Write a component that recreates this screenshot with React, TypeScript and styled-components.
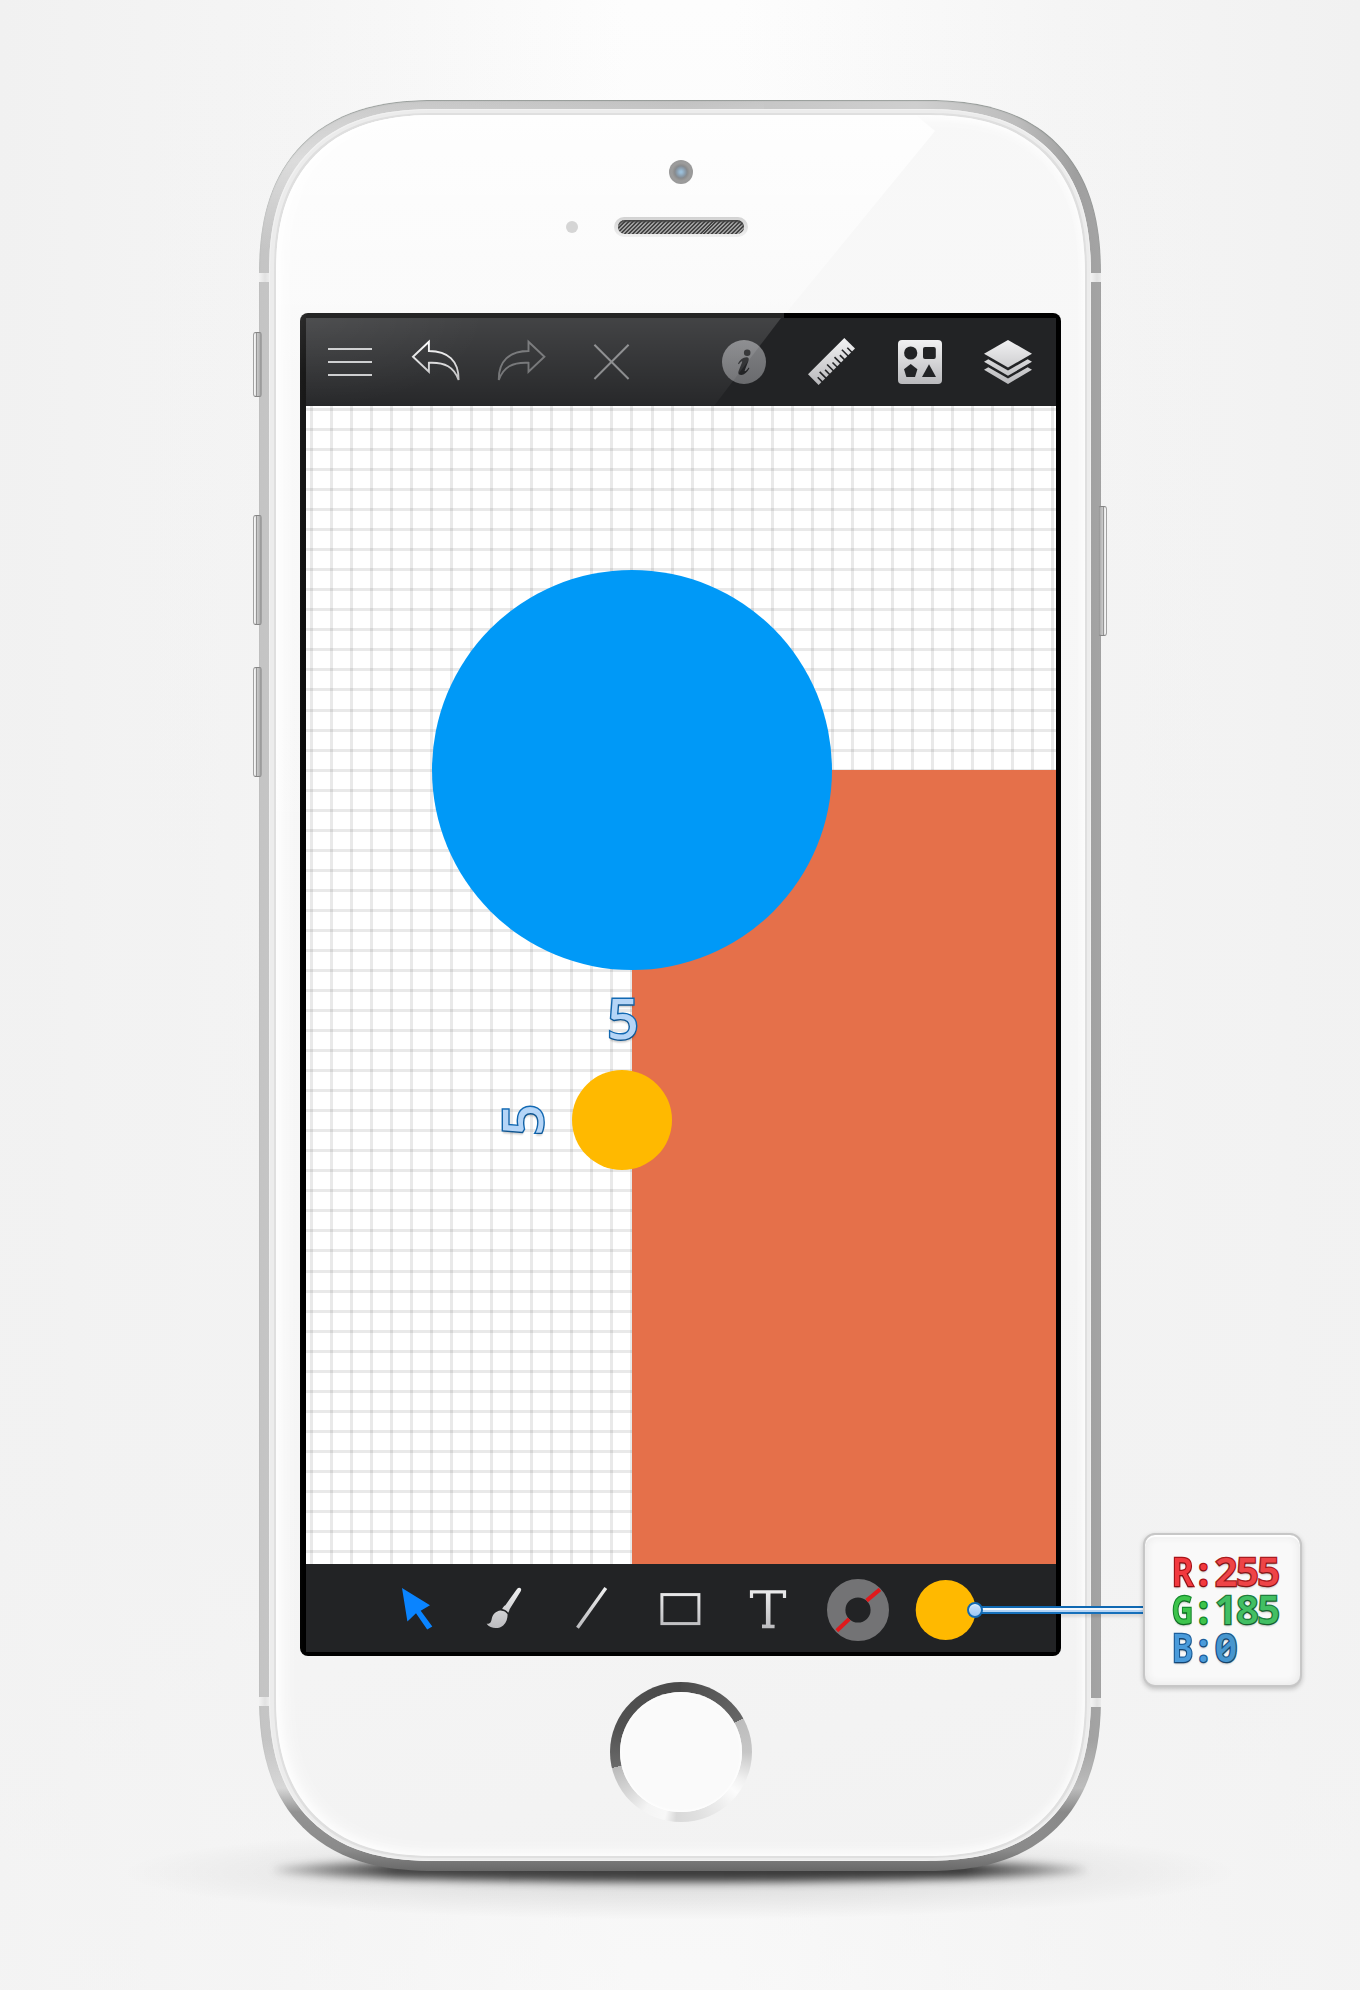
import React from "react";
import styled, { createGlobalStyle, css } from "styled-components";

const Global = createGlobalStyle`
  * { box-sizing: border-box; }
  html, body { margin: 0; padding: 0; background: #f3f3f3; }
`;

const Page = styled.main`
  position: relative;
  width: 1360px;
  height: 1990px;
  padding-top: 100px;
  display: flex;
  flex-direction: column;
  align-items: center;
  overflow: hidden;
  font-family: "Noto Sans", "Open Sans", sans-serif;
  background:
    linear-gradient(180deg, rgba(242, 242, 242, 0) 0, rgba(242, 242, 242, 0.85) 1500px, rgba(245, 245, 245, 0.6) 1990px),
    linear-gradient(90deg, #f1f1f1 0, #f5f5f5 22%, #fdfdfd 46%, #fdfdfd 54%, #f5f5f5 78%, #f1f1f1 100%);
`;

/* Continuous corners where the browser has them, plain arcs elsewhere. */
const softCorner = (plain: number, soft: number) => css`
  border-radius: ${plain}px;
  @supports (corner-shape: superellipse(1.28)) {
    border-radius: ${soft}px;
    corner-shape: superellipse(1.28);
  }
`;

const Body = styled.section`
  position: relative;
  z-index: 1;
  width: 842px;
  height: 1771px;
  padding: 9px 10px 10px;
  ${softCorner(153, 176)}
  background:
    linear-gradient(180deg, rgba(255, 255, 255, 0) 0, rgba(255, 255, 255, 0.38) 60px, rgba(255, 255, 255, 0) 150px) 0 0 / 60% 100% no-repeat,
    linear-gradient(180deg, rgba(110, 110, 110, 0) 1640px, rgba(255, 255, 255, 0.3) 1688px, rgba(125, 125, 125, 0.7) 1712px, #8a8a8a 1750px, #686868 1771px),
    linear-gradient(90deg, #c4c4c4 0, #cacaca 10%, #c2c2c2 50%, #cfcfcf 78%, #bdbdbd 90%, #9f9f9f 97%, #a4a4a4 100%);
  box-shadow: inset 0 1px 1px rgba(110, 120, 115, 0.55);
`;

const Bezel = styled.div`
  width: 822px;
  height: 1752px;
  padding: 6px 7px 5px;
  ${softCorner(143, 166)}
  background: #ececec;
  box-shadow: inset 0 0 0 1px #f1f1f1;
`;

const Face = styled.div`
  position: relative;
  width: 809px;
  height: 1741px;
  ${softCorner(138, 160)}
  overflow: hidden;
  display: flex;
  flex-direction: column;
  align-items: center;
  background: linear-gradient(165deg, #f8f8f8 0, #f6f6f6 60%, #f2f2f2 100%);
  box-shadow: 0 0 0 2px #dfdfdf;
  &::before {
    content: "";
    position: absolute;
    inset: 0;
    background: linear-gradient(180deg, rgba(255, 255, 255, 0.85), rgba(255, 255, 255, 0.2) 250px, rgba(255, 255, 255, 0) 900px);
    clip-path: polygon(0 0, 640px 0, 659px 16px, 510px 198px, 0 850px);
  }
  &::after {
    content: "";
    position: absolute;
    inset: 0;
    pointer-events: none;
    ${softCorner(138, 160)}
    box-shadow: inset 5px 0 20px #fff, inset 0 0 12px #fff;
  }
`;

const Antenna = styled.i<{ $side: "left" | "right"; $top: number }>`
  position: absolute;
  ${(p) => p.$side}: 0;
  top: ${(p) => p.$top}px;
  width: 10px;
  height: 9px;
  background: linear-gradient(90deg, #f2f2f2, #e2e2e2 60%, #ebebeb);
`;

const SideButton = styled.i<{ $side: "left" | "right"; $top: number; $height: number }>`
  position: absolute;
  ${(p) => p.$side}: -6px;
  top: ${(p) => p.$top}px;
  width: 9px;
  height: ${(p) => p.$height}px;
  border-radius: 3px;
  border: 1px solid #a2a2a2;
  border-top-color: #858585;
  border-bottom-color: #858585;
  background: linear-gradient(${(p) => (p.$side === "left" ? "90deg" : "270deg")}, #f4f4f4 0 20%, #8e8e8e 34%, #c6c6c6 50%, #b8b8b8 75%, #909090);
`;

const FrontParts = styled.header`
  position: relative;
  z-index: 1;
  height: 198px;
  width: 100%;
  display: flex;
  flex-direction: column;
  align-items: center;
  padding: 45px 0 0 1px;
`;

const Camera = styled.div`
  width: 24px;
  height: 24px;
  border-radius: 50%;
  background: radial-gradient(circle, #9cbfd9 0 1px, #8b9eae 4px, #868b90 6px, #8f8f8f 7px, #9c9c9c 9px, #999 12px);
`;

const SpeakerRow = styled.div`
  display: flex;
  align-items: center;
  margin-top: 33px;
  gap: 36px;
  padding-right: 48px;
`;

const Sensor = styled.div`
  width: 12px;
  height: 12px;
  border-radius: 50%;
  background: #d5d5d5;
`;

const Speaker = styled.div`
  width: 134px;
  height: 20px;
  border-radius: 10px;
  padding: 3px 4px;
  background: linear-gradient(#d2d2d2, #f0f0f0);
`;

const Mesh = styled.div`
  height: 14px;
  border-radius: 7px;
  background: repeating-linear-gradient(135deg, #444 0 1.4px, #a0a0a0 1.4px 2.8px);
  box-shadow: inset 0 2px 2px #444;
`;

const Screen = styled.div`
  position: relative;
  width: 761px;
  height: 1343px;
  flex: none;
  padding: 5px 5px 4px 6px;
  border-radius: 8px;
  background:
    linear-gradient(180deg, #2a2a2a 0, #191919 60px, #0e0e0e 400px, rgba(0, 0, 0, 0) 610px) 0 0 / 6px 100% no-repeat,
    linear-gradient(#252525, #252525) 0 0 / 484px 5px no-repeat,
    #000;
`;

const BAR = "#222325";

const TopBar = styled.nav`
  position: relative;
  height: 88px;
  display: flex;
  justify-content: space-between;
  align-items: center;
  padding: 0 26px 0 22px;
  background: ${BAR};
  &::after {
    content: "";
    position: absolute;
    inset: 0;
    clip-path: polygon(0 0, 475px 0, 408px 88px, 0 88px);
    background:
      radial-gradient(180px 90px at 0 0, rgba(255, 255, 255, 0.06), rgba(255, 255, 255, 0)),
      linear-gradient(180deg, rgba(255, 255, 255, 0.15), rgba(255, 255, 255, 0.025));
  }
`;

const Group = styled.div<{ $gap: number }>`
  display: flex;
  gap: ${(p) => p.$gap}px;
`;

const Glyph = styled.svg`
  display: block;
  width: 44px;
  height: 44px;
  overflow: visible;
`;

const Canvas = styled.div`
  position: relative;
  height: 1158px;
  overflow: hidden;
  background:
    repeating-linear-gradient(90deg, rgba(0, 0, 0, 0.085) 0 3px, transparent 3px 20.03px) 4px 0,
    repeating-linear-gradient(180deg, rgba(0, 0, 0, 0.085) 0 3px, transparent 3px 20.035px) 0 2px,
    #fff;
  background-repeat: no-repeat;
`;

const Block = styled.div`
  position: absolute;
  left: 326px;
  top: 364px;
  width: 424px;
  height: 794px;
  background: #e5704a;
`;

const Disc = styled.div<{ $x: number; $y: number; $r: number; $color: string }>`
  position: absolute;
  left: ${(p) => p.$x - p.$r}px;
  top: ${(p) => p.$y - p.$r}px;
  width: ${(p) => p.$r * 2}px;
  height: ${(p) => p.$r * 2}px;
  border-radius: 50%;
  background: ${(p) => p.$color};
`;

const Dimension = styled.span<{ $x: number; $y: number; $turn?: boolean }>`
  position: absolute;
  left: ${(p) => p.$x - 20}px;
  top: ${(p) => p.$y - 30}px;
  width: 40px;
  height: 60px;
  line-height: 60px;
  text-align: center;
  font-size: 56px;
  font-weight: 500;
  color: #b5d5f7;
  -webkit-text-stroke: 2.8px #1269b3;
  paint-order: stroke fill;
  text-shadow: ${(p) => (p.$turn ? "-3px 0" : "0 3px")} 2px rgba(0, 0, 0, 0.2);
  transform: ${(p) => (p.$turn ? "rotate(-90deg)" : "none")};
`;

const BottomBar = styled.nav`
  height: 88px;
  display: flex;
  align-items: center;
  padding-left: 66px;
  background: ${BAR};
`;

const Slot = styled.div`
  width: 88px;
  height: 88px;
  display: flex;
  align-items: center;
  justify-content: center;
`;

const Home = styled.div`
  width: 142px;
  height: 140px;
  margin: 26px 0 0 1px;
  padding: 10px;
  border-radius: 50%;
  flex: none;
  background: conic-gradient(#4c4c4c 0, #666 61.5deg, #bcbcbc 61.5deg, #c6c6c6 90deg, #f0f0f0 114deg, #fcfcfc 126deg, #ececec 145deg, #e0e0e0 165deg, #d9d9d9 184deg, #f8f8f8 194deg, #f4f4f4 212deg, #d8d8d8 232deg, #bababa 257deg, #6a6a6a 257deg, #525252 290deg, #4a4a4a 360deg);
`;

const HomeFace = styled.div`
  width: 122px;
  height: 120px;
  border-radius: 50%;
  background: #fafafa;
  box-shadow: inset 0 1px 5px #fff, inset 0 -1px 3px #fff;
`;

const FloorShadow = styled.div`
  position: absolute;
  left: 274px;
  top: 1858px;
  width: 812px;
  height: 24px;
  border-radius: 50%;
  background: linear-gradient(90deg, rgba(40, 40, 40, 0.2), rgba(40, 40, 40, 0.85) 15%, rgba(40, 40, 40, 0.9) 85%, rgba(40, 40, 40, 0.2));
  filter: blur(4px);
`;

const FloorHaze = styled.div`
  position: absolute;
  left: 120px;
  top: 1825px;
  width: 1120px;
  height: 95px;
  background: radial-gradient(closest-side, rgba(0, 0, 0, 0.14), rgba(0, 0, 0, 0.06) 60%, rgba(0, 0, 0, 0));
`;

const Callout = styled.aside`
  position: absolute;
  z-index: 2;
  left: 967px;
  top: 1533px;
  display: flex;
  align-items: center;
`;

const Knob = styled.i`
  width: 16px;
  height: 16px;
  border-radius: 50%;
  border: 2px solid #1269b3;
  background: linear-gradient(#cbe2fb, #9ec7f3);
  box-shadow: inset 0 1px 1px #e6f2ff;
  z-index: 1;
`;

const Lead = styled.i`
  width: 162px;
  height: 8px;
  margin-left: -2px;
  background: linear-gradient(#0f68b2 0 2px, #f0f7ff 2px 4px, #b4d4f5 4px 6px, #1670bb 6px 8px);
  box-shadow: 0 3px 3px rgba(0, 0, 0, 0.1);
`;

const Card = styled.div`
  width: 159px;
  height: 154px;
  padding: 17px 0 0 27px;
  border: 2px solid #c7c7c7;
  border-radius: 12px;
  background: #f9f9f9;
  box-shadow: inset 0 2px 1px #fff, inset 0 0 10px #e4e4e4, 0 2px 5px rgba(0, 0, 0, 0.22);
`;

const Channel = styled.div<{ $fill: string; $edge: string; $value: string; $valueEdge: string }>`
  display: flex;
  height: 38px;
  align-items: center;
  font-size: 39px;
  line-height: 38px;
  font-weight: 600;
  paint-order: stroke fill;
  color: ${(p) => p.$fill};
  -webkit-text-stroke: 2.6px ${(p) => p.$edge};
  text-shadow: 0 2px 2px rgba(0, 0, 0, 0.28);
  strong {
    font-weight: 600;
    color: ${(p) => p.$value};
    -webkit-text-stroke-color: ${(p) => p.$valueEdge};
    letter-spacing: -1px;
    font-feature-settings: "zero" 1;
  }
`;

const Letter = styled.span<{ $squeeze: number }>`
  width: 20px;
  transform: scaleX(${(p) => p.$squeeze});
  transform-origin: 0 50%;
`;

const Colon = styled.span`
  width: 23px;
  text-align: center;
`;

const Metal = ({ id, from = "#f1f1f2", to = "#b9b9bc" }: { id: string; from?: string; to?: string }) => (
  <defs>
    <linearGradient id={id} x1="0" y1="0" x2="0" y2="44" gradientUnits="userSpaceOnUse">
      <stop offset="0" stopColor={from} />
      <stop offset="1" stopColor={to} />
    </linearGradient>
  </defs>
);

const ARROW = "M-1 16.7 L14.9 1.8 V11 C34 11 45 21 44.6 40 C40 27 31 22 14.9 22.8 V31.8 Z";

const MenuIcon = () => (
  <Glyph viewBox="0 0 44 44"><path d="M0 9H44M0 22H44M0 35H44" stroke="#c9cacc" strokeWidth="2" /></Glyph>
);
const UndoIcon = () => (
  <Glyph viewBox="0 0 44 44"><Metal id="undo" from="#fff" to="#b4b4b6" /><path d={ARROW} fill="none" stroke="url(#undo)" strokeWidth="1.9" /></Glyph>
);
const RedoIcon = () => (
  <Glyph viewBox="0 0 44 44"><path d={ARROW} transform="translate(43.4 0) scale(-1 1)" fill="none" stroke="#6c6d6f" strokeWidth="1.9" /></Glyph>
);
const CloseIcon = () => (
  <Glyph viewBox="0 0 44 44"><path d="M8.4 4.8L42.6 39M42.6 4.8L8.4 39" stroke="#848587" strokeWidth="2" /></Glyph>
);
const InfoIcon = () => (
  <Glyph viewBox="0 0 44 44">
    <Metal id="info" from="#808184" to="#6a6b6e" />
    <circle cx="22" cy="22" r="22" fill="url(#info)" />
    <circle cx="25.2" cy="12.8" r="3.3" fill={BAR} />
    <path d="M16 23.5C17.8 19.6 21 17.4 24.4 17.2C26.8 17.2 27.2 18.8 26.4 21L22.8 30.2C22.3 31.8 23.4 31.7 26.8 27.4L27.4 28.2C25.2 32.2 22.4 34.8 19.2 35C16.2 35 15.8 33 16.8 30.6L20 22.6C20.6 20.8 19.6 20.6 16.9 24.2Z" fill={BAR} />
  </Glyph>
);
const RulerIcon = () => (
  <Glyph viewBox="0 0 44 44">
    <Metal id="ruler" />
    <path d="M34.3 -2L45 8.6L8.6 45L-2 34.3Z" fill="url(#ruler)" />
    {Array.from({ length: 9 }, (_, i) => {
      const x = 41.6 - i * 3.7;
      const y = 12 + i * 3.7;
      const n = i % 2 ? 6 : 4.3;
      return <path key={i} d={`M${x + 1} ${y + 1}L${x - n} ${y - n}`} stroke={BAR} strokeWidth="1.6" />;
    })}
  </Glyph>
);
const ShapesIcon = () => (
  <Glyph viewBox="0 0 44 44">
    <Metal id="shapes" />
    <rect width="44" height="44" rx="4" fill="url(#shapes)" />
    <g fill={BAR}>
      <circle cx="12.7" cy="13" r="6.6" />
      <rect x="25" y="7" width="12.8" height="12" rx="2" />
      <path d="M12.7 24L19.4 29.2L17 37H8.4L6 29.2Z" />
      <path d="M31 24.3L38 37H24Z" />
    </g>
  </Glyph>
);
const LayersIcon = () => (
  <Glyph viewBox="0 0 44 44">
    <Metal id="layers" />
    <g fill="url(#layers)">
      <path d="M22 0L46 13.8L22 27.6L-2 13.8Z" />
      <path d="M2.3 19.2L22 30.6L41.7 19.2L46 21.7L22 35.8L-2 21.7Z" />
      <path d="M2.3 27.2L22 38.6L41.7 27.2L46 29.7L22 44L-2 29.7Z" />
    </g>
  </Glyph>
);
const PointerIcon = () => (
  <Glyph viewBox="0 0 44 44"><path d="M8 2L36 19.3L26.7 24.7L38.3 40.4L33.2 43.4L22 27.3L13.4 35.4Z" fill="#0a84ff" /></Glyph>
);
const BrushIcon = () => (
  <Glyph viewBox="0 0 44 44">
    <Metal id="brush" />
    <g fill="url(#brush)">
      <path d="M35.2 2.8C36.2 1.4 38 1.4 38.8 2.4C39.4 3.2 39.2 4.4 38.6 5.4L27.6 23.2C27.4 24.2 27 25.6 26.2 26.8C24.6 24.8 22.8 23.6 20.2 23.1C20.9 21.2 22.1 19.8 23.4 19.2Z" />
      <path d="M18.6 24.5C21.8 24.7 25 26.6 25.6 28.6C25.6 32.4 24.6 36.4 21.2 39.5C17.6 43 8.6 43.4 4.6 37.8C7.8 37.8 9 36.6 9.6 33.4C10.4 28.6 13.8 25 18.6 24.5Z" />
    </g>
  </Glyph>
);
const LineIcon = () => (
  <Glyph viewBox="0 0 44 44"><Metal id="line" /><path d="M7.5 41.8L35.8 2" stroke="url(#line)" strokeWidth="3.4" /></Glyph>
);
const RectIcon = () => (
  <Glyph viewBox="0 0 44 44"><Metal id="rect" /><rect x="3.9" y="8.6" width="37" height="29" fill="none" stroke="url(#rect)" strokeWidth="3" /></Glyph>
);
const TypeIcon = () => (
  <Glyph viewBox="0 0 44 44">
    <Metal id="type" />
    <g stroke="url(#type)" fill="none">
      <path d="M5.5 12V5.8H38.5V12" strokeWidth="3.2" />
      <path d="M22.2 6V41" strokeWidth="4.6" />
      <path d="M16 40.4L28.6 40.5" strokeWidth="3.6" />
    </g>
  </Glyph>
);
const StrokeSwatch = () => (
  <Glyph viewBox="0 0 44 44">
    <circle cx="24" cy="24" r="21.8" fill="none" stroke="#737375" strokeWidth="18.4" />
    <path d="M2.8 44.8L15.2 33M32.6 14.6L46 3.4" stroke="#e0191c" strokeWidth="4" />
  </Glyph>
);
const FillSwatch = () => (
  <Glyph viewBox="0 0 44 44"><circle cx="23.7" cy="24" r="30" fill="#ffb900" /></Glyph>
);

export default function App() {
  const tools = [PointerIcon, BrushIcon, LineIcon, RectIcon, TypeIcon, StrokeSwatch, FillSwatch];
  return (
    <Page>
      <Global />
      <FloorHaze />
      <FloorShadow />
      <Body>
        <SideButton $side="left" $top={232} $height={65} />
        <SideButton $side="left" $top={415} $height={110} />
        <SideButton $side="left" $top={567} $height={110} />
        <SideButton $side="right" $top={406} $height={130} />
        <Antenna $side="left" $top={173} />
        <Antenna $side="right" $top={173} />
        <Antenna $side="left" $top={1597} />
        <Antenna $side="right" $top={1598} />
        <Bezel>
          <Face>
            <FrontParts>
              <Camera />
              <SpeakerRow>
                <Sensor />
                <Speaker><Mesh /></Speaker>
              </SpeakerRow>
            </FrontParts>
            <Screen>
              <TopBar>
                <Group $gap={42}>
                  <MenuIcon />
                  <UndoIcon />
                  <RedoIcon />
                  <CloseIcon />
                </Group>
                <Group $gap={44}>
                  <InfoIcon />
                  <RulerIcon />
                  <ShapesIcon />
                  <LayersIcon />
                </Group>
              </TopBar>
              <Canvas>
                <Block />
                <Disc $x={326} $y={364} $r={200} $color="#0099f7" />
                <Disc $x={316} $y={714} $r={50} $color="#ffb900" />
                <Dimension $x={317} $y={611}>5</Dimension>
                <Dimension $x={215} $y={714} $turn>5</Dimension>
              </Canvas>
              <BottomBar>
                {tools.map((Tool, i) => <Slot key={i}><Tool /></Slot>)}
              </BottomBar>
            </Screen>
            <Home><HomeFace /></Home>
          </Face>
        </Bezel>
      </Body>
      <Callout>
        <Knob />
        <Lead />
        <Card>
          <Channel $fill="#f2393f" $edge="#a91318" $value="#ee4447" $valueEdge="#a91c20">
            <Letter $squeeze={0.85}>R</Letter><Colon>:</Colon><strong>255</strong>
          </Channel>
          <Channel $fill="#3dc44c" $edge="#138a2c" $value="#42bf63" $valueEdge="#1f7d3d">
            <Letter $squeeze={0.74}>G</Letter><Colon>:</Colon><strong>185</strong>
          </Channel>
          <Channel $fill="#4a9bdb" $edge="#1d5f9c" $value="#4796ce" $valueEdge="#1d5b8c">
            <Letter $squeeze={0.82}>B</Letter><Colon>:</Colon><strong>0</strong>
          </Channel>
        </Card>
      </Callout>
    </Page>
  );
}
